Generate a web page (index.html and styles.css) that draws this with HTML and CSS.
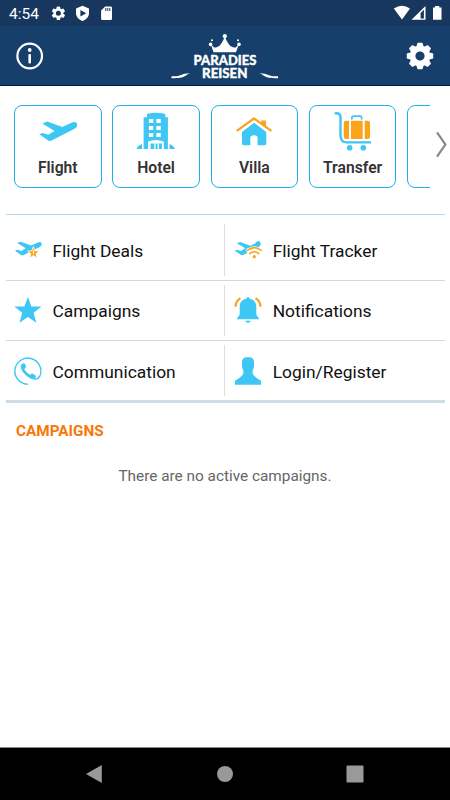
FILE: index.html
```html
<!DOCTYPE html>
<html lang="en">
<head>
<meta charset="utf-8">
<title>Paradies Reisen</title>
<link rel="stylesheet" href="styles.css">
</head>
<body>
<svg width="0" height="0" class="defs" aria-hidden="true">
  <symbol id="plane" viewBox="39 121 39 21"><path d="M42.3 123.4L47.3 121.5L62.3 127L72.7 122.2Q76.1 121.1 77.2 124Q77.6 127 75 128.6L51.7 140.6Q49.7 141.5 47.8 140.3L39.3 134.3L42.7 133.1L48.3 134.8L54.6 131Z"/></symbol>
  <symbol id="gear" viewBox="2 2 20 20"><path d="M19.14 12.94c.04-.3.06-.61.06-.94 0-.32-.02-.64-.07-.94l2.03-1.58a.49.49 0 0 0 .12-.61l-1.92-3.32a.49.49 0 0 0-.59-.22l-2.39.96a7 7 0 0 0-1.62-.94l-.36-2.54a.48.48 0 0 0-.48-.41h-3.84a.48.48 0 0 0-.47.41l-.36 2.54c-.59.24-1.13.57-1.62.94l-2.39-.96a.48.48 0 0 0-.59.22L2.74 8.87a.48.48 0 0 0 .12.61l2.03 1.58a7.5 7.5 0 0 0 0 1.88l-2.03 1.58a.49.49 0 0 0-.12.61l1.92 3.32c.12.22.37.29.59.22l2.39-.96c.5.38 1.03.7 1.62.94l.36 2.54c.05.24.24.41.48.41h3.84c.24 0 .44-.17.47-.41l.36-2.54c.59-.24 1.13-.56 1.62-.94l2.39.96c.22.08.47 0 .59-.22l1.92-3.32a.48.48 0 0 0-.12-.61zM12 15.6a3.6 3.6 0 1 1 0-7.2 3.6 3.6 0 0 1 0 7.2z"/></symbol>
  <symbol id="cog" viewBox="-14 -14 28 28">
    <path fill-rule="evenodd" d="M0-10.400A10.400 10.400 0 1 1 0 10.400A10.400 10.400 0 1 1 0-10.400ZM0-4.600A4.600 4.600 0 1 0 0 4.600A4.600 4.600 0 1 0 0-4.600Z"/>
    <path id="tooth" d="M-3.600-9.500L-2.400-13.200H2.400L3.600-9.500Z"/>
    <use href="#tooth" transform="rotate(45)"/><use href="#tooth" transform="rotate(90)"/><use href="#tooth" transform="rotate(135)"/><use href="#tooth" transform="rotate(180)"/><use href="#tooth" transform="rotate(225)"/><use href="#tooth" transform="rotate(270)"/><use href="#tooth" transform="rotate(315)"/>
  </symbol>
</svg>

<div class="status">
  <span class="clock">4:54</span>
  <svg class="white" width="64" height="26" viewBox="50 0 64 26">
    <use href="#gear" x="51.4" y="6.2" width="14" height="14"/>
    <path fill-rule="evenodd" d="M82.5 5.8L89 8.4V13C89 16.8 86 20 82.5 20.9C79 20 76 16.8 76 13V8.4ZM80.4 9.9V16.5L86.2 13.2Z"/>
    <path d="M105.2 6.5H110.8Q112 6.5 112 7.7V18.8Q112 20 110.8 20H102.3Q101.1 20 101.1 18.8V10.6Z"/>
    <path class="card-pins" d="M105.8 8V11M107.8 8V11M109.8 8V11"/>
  </svg>
  <svg class="white signal" width="50" height="26" viewBox="393 0 50 26">
    <path d="M393.8 8.5Q402 3 410 8.5L402 19.5Z"/>
    <path fill-rule="evenodd" d="M425.5 6V19.8H411.5ZM423.9 9.8L420.6 13V18.4H423.9Z"/>
    <path d="M435 6H439.3V7.4H441.5V19.8H433V7.4H435Z"/>
  </svg>
</div>

<header class="header">
  <svg width="28" height="28" viewBox="16 42 28 28"><circle class="ring" cx="29.7" cy="56" r="12.3"/><circle class="white" cx="29.7" cy="50" r="1.900"/><rect class="white" x="28.4" y="54" width="2.600" height="9.4" rx="1"/></svg>
  <svg class="white" width="110" height="52" viewBox="170 30 110 52">
    <path d="M213.5 52.2L211 44.8L214.2 47.4Q216.4 48 218 46.6Q221.4 45.4 224.8 36.5Q228.2 45.4 231.6 46.6Q233.4 48 235.6 47.4L238.7 44.8L236 52.2Z"/>
    <circle cx="224.8" cy="36.2" r="2.1"/><circle cx="210.6" cy="44.4" r="1.8"/><circle cx="239" cy="44.4" r="1.8"/><circle cx="212" cy="40.2" r="1"/><circle cx="238" cy="40.2" r="1"/>
    <text class="logo" x="193.5" y="65.4" textLength="63" lengthAdjust="spacingAndGlyphs">PARADIES</text>
    <text class="logo" x="202" y="77.900" textLength="45.5" lengthAdjust="spacingAndGlyphs">REISEN</text>
    <path d="M171.5 76.2C183 76.8 180 73.2 190 73.2C184 75.2 187 78.2 171.5 78.2Z"/>
    <path d="M278 76.2C266.5 76.8 269.5 73.2 259.5 73.2C265.5 75.2 262.5 78.2 278 78.2Z"/>
  </svg>
  <svg class="white" width="28" height="28"><use href="#cog" width="28" height="28"/></svg>
</header>

<main>
  <section class="services">
    <div class="strip">
      <div class="tile">
        <svg class="blue" width="60" height="44" viewBox="28 110 60 44"><use href="#plane" x="39" y="121" width="39" height="21"/></svg>
        <span>Flight</span>
      </div>
      <div class="tile">
        <svg class="blue" width="60" height="44" viewBox="126.4 110 60 44">
          <path fill-rule="evenodd" d="M144 149V117.3H147.3V114Q156.3 111.600 165.7 114V117.3H168.3V149ZM149.3 119V123H153.7V119ZM156.7 119V123H161.2V119ZM149.3 126V130H153.7V126ZM156.7 126V130H161.2V126ZM149.3 133V137H153.7V133ZM156.7 133V137H161.2V133Z"/>
          <path d="M137 149Q138 145.6 142.4 144V149ZM175.3 149Q174.3 145.6 169.9 144V149Z"/>
          <path class="cut" d="M148.5 141.4Q156.3 138.4 164.2 141.4V149H148.5Z"/>
          <path d="M151 143.4H154.7V149H151ZM156 143.4H158V149H156ZM159.3 143.4H162.3V149H159.3Z"/>
        </svg>
        <span>Hotel</span>
      </div>
      <div class="tile">
        <svg class="blue" width="60" height="44" viewBox="224.7 110 60 44">
          <path class="orange" d="M262 120.4H266.7V127.5L262 124Z"/>
          <path class="roof" d="M238.2 130.3L254.7 118.5L271.3 130.3"/>
          <path d="M254.7 122.7L267 132V143.5Q267 145.2 265.3 145.2H258.3V138Q258.3 135.2 254.7 135.2Q251 135.2 251 138V145.2H244.4Q242.7 145.2 242.7 143.5V132Z"/>
        </svg>
        <span>Villa</span>
      </div>
      <div class="tile">
        <svg class="blue" width="60" height="44" viewBox="323 110 60 44">
          <path class="cart" d="M335.7 113.2H337Q340.5 113.4 340.5 117V136Q341 142.4 346.5 142.4H370"/>
          <path class="handle" d="M351.9 119.6V117.6Q351.9 116.2 353.5 116.2H360Q361.6 116.2 361.6 117.6V119.6"/>
          <circle cx="349.7" cy="147.7" r="2.8"/><circle cx="363.3" cy="147.7" r="2.8"/>
          <path class="orange" d="M349 120.7V139H346Q343.7 139 343.7 136.7V123Q343.7 120.7 346 120.7ZM351 120.7H362.7V139H351ZM364.7 120.7H367.7Q370 120.7 370 123V136.7Q370 139 367.7 139H364.7Z"/>
        </svg>
        <span>Transfer</span>
      </div>
      <div class="tile"></div>
    </div>
    <svg class="next" width="14" height="28" viewBox="434 130 14 28"><path d="M437 132.3L445.4 144.5L437 156.7"/></svg>
  </section>

  <nav class="menu">
    <div class="row">
      <div class="item">
        <svg class="blue" width="30" height="30" viewBox="13 235 30 30"><use href="#plane" x="14.8" y="241.3" width="27.5" height="14.8"/><path class="badge" d="M33.4 246.7L35 250.7L39.2 251L36 253.8L37 258L33.4 255.7L29.8 258L30.8 253.8L27.6 251L31.8 250.7Z"/><path class="mark" d="M33.4 250V254M33.4 255V256.2"/></svg>
        <span>Flight Deals</span>
      </div>
      <div class="item">
        <svg class="blue" width="30" height="30" viewBox="233 235 30 30"><use href="#plane" x="234.6" y="241.3" width="26.5" height="14.8"/><path class="halo" d="M245.600 250Q254.300 242.500 263 250L257 259H251.5Z"/><path class="nose" d="M256 243.700L260 242.200"/><path class="waves" d="M247.2 250.5Q254.3 244.7 261.4 250.5M249.6 253.6Q254.3 250 259 253.6"/><circle class="orange" cx="254.3" cy="256.7" r="1.6"/></svg>
        <span>Flight Tracker</span>
      </div>
    </div>
    <div class="row">
      <div class="item">
        <svg class="blue" width="30" height="30" viewBox="13 295.5 30 30"><path d="M27.9 297.5L31.4 307H41.5L33.6 313.2L36.3 323.2L27.9 317.5L19.5 323.2L22.2 313.2L14.3 307H24.4Z"/></svg>
        <span>Campaigns</span>
      </div>
      <div class="item">
        <svg class="blue" width="30" height="30" viewBox="233 295.5 30 30"><path d="M246.4 299.3Q246.4 297.6 248 297.6Q249.6 297.6 249.6 299.3C254 300 256.3 303 256.3 307V314.5Q256.5 317 258.9 318.5V319.8H237.1V318.5Q239.5 317 239.7 314.5V307C239.7 303 242 300 246.4 299.3ZM245 321.2H251Q250.3 323.2 248 323.2Q245.7 323.2 245 321.2Z"/><path class="rings" d="M235.5 307.3Q235.6 301.5 240.5 298.8M255.5 298.8Q260.4 301.5 260.5 307.3"/></svg>
        <span>Notifications</span>
      </div>
    </div>
    <div class="row">
      <div class="item">
        <svg class="blue" width="30" height="30" viewBox="13 355.7 30 30"><path class="loop" d="M28.2 383.8A13 13 0 1 1 40 375.5Q37.8 379.5 33.7 378.5"/><path d="M21.7 364Q24 362 25.2 363.7L26 366.7Q25.6 368.2 24.3 368.5Q25.5 372 30.3 374.6Q31.4 373 33 373.4L35.6 375.3Q36.5 377.3 33.7 379Q29.5 379 24.2 373.2Q18.8 367 21.7 364Z"/></svg>
        <span>Communication</span>
      </div>
      <div class="item">
        <svg class="blue" width="30" height="30" viewBox="233 355.7 30 30"><path d="M245 357H251Q254 358.5 254 362V367L252.7 370.5V373.5Q254 376.5 261 380.5V384.5H235V380.5Q242 376.5 243.3 373.5V370.5L242 367V362Q242 358.5 245 357Z"/></svg>
        <span>Login/Register</span>
      </div>
    </div>
  </nav>

  <section class="campaigns">
    <h2>CAMPAIGNS</h2>
    <p>There are no active campaigns.</p>
  </section>
</main>

<footer class="navbar">
  <svg width="18" height="20" viewBox="85 764 18 20"><path d="M101.8 765V783L86 774Z"/></svg>
  <svg width="18" height="18"><circle cx="9" cy="9" r="8"/></svg>
  <svg width="18" height="18"><rect x=".5" y=".5" width="17" height="17" rx="1"/></svg>
</footer>
</body>
</html>
```

FILE: styles.css
```css
* { box-sizing: border-box; }

body {
  margin: 0;
  width: 450px;
  height: 800px;
  display: flex;
  flex-direction: column;
  overflow: hidden;
  background: #fff;
  font-family: Roboto, "Liberation Sans", sans-serif;
}

svg { display: block; flex: none; overflow: visible; }
.defs { position: absolute; }
.white { fill: #fff; }
.blue { fill: #3ec6f5; }
.orange { fill: #faa31b; }

.status {
  height: 26px;
  flex: none;
  display: flex;
  align-items: center;
  padding: 0 7px 0 9px;
  background: #17375e;
  color: #fff;
}
.clock { width: 41px; font-size: 15.5px; line-height: 26px; padding-top: 2px; }
.signal { margin-left: auto; }
.card-pins { stroke: #17375e; stroke-width: 1; }

.header {
  height: 60px;
  flex: none;
  display: flex;
  align-items: center;
  justify-content: space-between;
  padding: 0 16px;
  background: #163f6b;
  border-bottom: 1px solid #06164f;
}
.ring { fill: none; stroke: #fff; stroke-width: 2.2; }
.logo { font: 900 14px Lato, sans-serif; stroke: #fff; stroke-width: .35; stroke-linejoin: round; }

main { flex: 1; }

.services {
  height: 129px;
  display: flex;
  align-items: flex-start;
  margin: 0 5px 0 5.5px;
  padding: 18.5px 0 0 8.5px;
  border-bottom: 1px solid #b5daf0;
}
.strip {
  width: 416px;
  flex: none;
  display: flex;
  gap: 10.8px;
  overflow: hidden;
}
.tile {
  width: 87.5px;
  height: 83.5px;
  flex: none;
  display: flex;
  flex-direction: column;
  align-items: center;
  padding-top: 4.5px;
  border: 1px solid #1fb0ec;
  border-radius: 8px;
}
.tile span {
  margin-top: 4px;
  font-size: 15.7px;
  line-height: 20px;
  font-weight: 600;
  color: #333;
}
.cut { fill: #fff; }
.roof { fill: none; stroke: #faa31b; stroke-width: 2.2; stroke-linecap: round; stroke-linejoin: round; }
.cart { fill: none; stroke: #3ec6f5; stroke-width: 2.4; stroke-linecap: round; }
.handle { fill: none; stroke: #3ec6f5; stroke-width: 1.8; }
.next { margin: 25.5px 0 0 4px; fill: none; stroke: #888; stroke-width: 2.2; }

.menu {
  margin: 5px 5px 0 5.5px;
  border-bottom: 2px solid #c9dfee;
}
.row {
  height: 60.5px;
  display: flex;
  padding: 4px 0;
  border-bottom: 1px solid #d8d8d8;
}
.row:last-child { height: 60px; }
.item {
  width: 219.7px;
  display: flex;
  align-items: center;
  gap: 10px;
  padding-left: 7.5px;
  font-size: 17.4px;
  color: #111;
}
.item span { padding-top: 2px; }
.item:first-child { border-right: 1px solid #dedede; }
.row .item:first-child svg { margin-left: -.5px; }
.badge { fill: #faa31b; stroke: #fff; stroke-width: .8; }
.mark { stroke: #fff; stroke-width: 1; }
.halo { fill: #fff; }
.nose { stroke: #3ec6f5; stroke-width: 3; }
.waves { fill: none; stroke: #faa31b; stroke-width: 1.6; stroke-linecap: round; }
.rings { fill: none; stroke: #faa31b; stroke-width: 2.2; }
.loop { fill: none; stroke: #3ec6f5; stroke-width: 1.4; }

.campaigns { padding: 17.5px 16px 0; }
h2 {
  margin: 0;
  font-size: 15.3px;
  line-height: 20px;
  font-weight: 700;
  color: #fb7705;
}
p {
  margin: 25px 0 0;
  text-align: center;
  font-size: 15.35px;
  line-height: 20px;
  color: #666;
}

.navbar {
  height: 53px;
  flex: none;
  display: flex;
  align-items: center;
  justify-content: space-between;
  padding: 0 86.5px 0 85px;
  border-top: 1px solid #888;
  background: #000;
  fill: #999;
}
.navbar svg:nth-child(2) { margin-left: 1px; }
```
